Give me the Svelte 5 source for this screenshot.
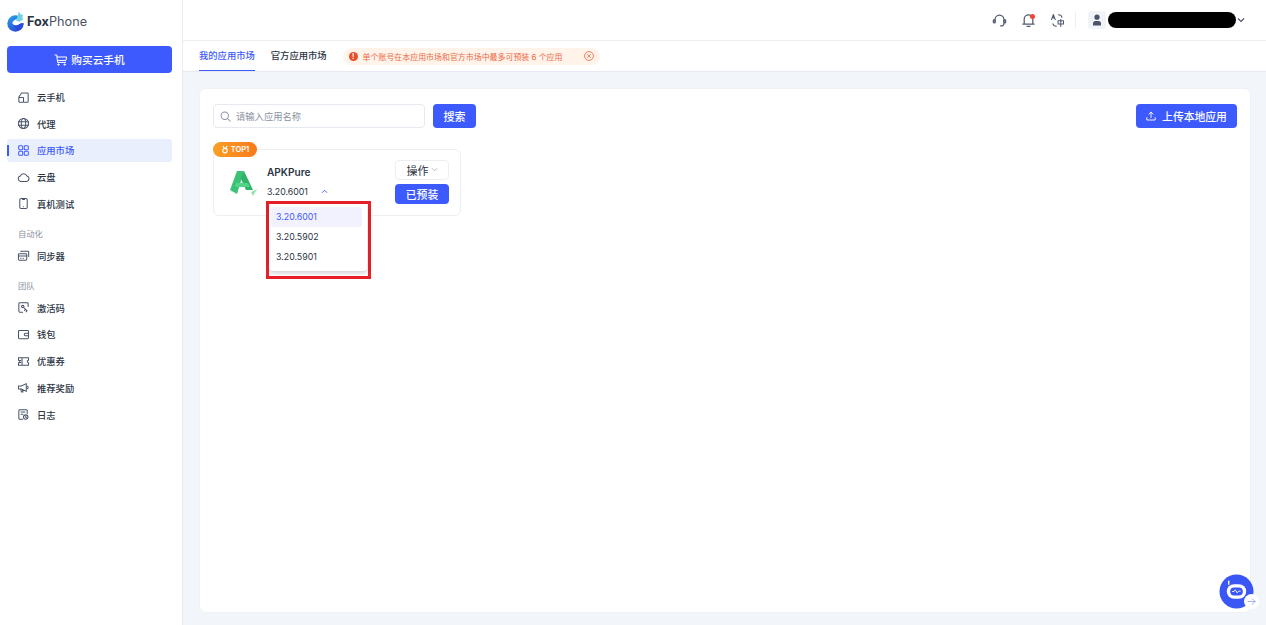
<script>
  const mainNav = [
    { label: '云手机', icon: 'phones' },
    { label: '代理', icon: 'globe' },
    { label: '应用市场', icon: 'grid', active: true },
    { label: '云盘', icon: 'cloud' },
    { label: '真机测试', icon: 'device' }
  ];
  const autoNav = [{ label: '同步器', icon: 'sync' }];
  const teamNav = [
    { label: '激活码', icon: 'code' },
    { label: '钱包', icon: 'wallet' },
    { label: '优惠券', icon: 'coupon' },
    { label: '推荐奖励', icon: 'horn' },
    { label: '日志', icon: 'log' }
  ];
  const versions = ['3.20.6001', '3.20.5902', '3.20.5901'];
</script>

{#snippet navIcon(name)}
  <svg class="nav-icon" viewBox="0 0 14 14" fill="none" stroke="currentColor" stroke-width="1.1" stroke-linejoin="round" stroke-linecap="round">
    {#if name === 'phones'}
      <path d="M5 2.2h6.200a.8.8 0 0 1 .8.8v8.200a.8.8 0 0 1-.8.8H7.500M5 2.200 2 6.400M2 7h4.400a.6.6 0 0 1 .6.6v3.800a.6.6 0 0 1-.6.6H2.600a.6.6 0 0 1-.6-.6z" />
    {:else if name === 'globe'}
      <circle cx="7" cy="7" r="5.400" />
      <ellipse cx="7" cy="7" rx="2.400" ry="5.400" />
      <path d="M1.600 5.200h10.800M1.600 8.800h10.800" />
    {:else if name === 'grid'}
      <rect x="1.800" y="1.800" width="4.400" height="4.400" rx="1.100" />
      <rect x="7.800" y="1.800" width="4.400" height="4.400" rx="1.100" />
      <rect x="1.800" y="7.800" width="4.400" height="4.400" rx="1.100" />
      <rect x="7.800" y="7.800" width="4.400" height="4.400" rx="1.100" />
    {:else if name === 'cloud'}
      <path d="M4 11.200a2.900 2.900 0 0 1-.4-5.700 3.700 3.700 0 0 1 7-.2 3 3 0 0 1-.4 5.900z" />
    {:else if name === 'device'}
      <rect x="3" y="1.500" width="8" height="11" rx="1.400" />
      <path d="M6 1.700v1h2v-1M7 10.400v.2" />
    {:else if name === 'sync'}
      <rect x="1.500" y="5" width="9" height="7" rx="1" />
      <path d="M1.500 7.600h9M4 2.400h7.600a1 1 0 0 1 1 1V8M4 10h.4M6.400 10h.4" />
    {:else if name === 'code'}
      <path d="M6 12H3a1 1 0 0 1-1-1V3a1 1 0 0 1 1-1h8a1 1 0 0 1 1 1v3" />
      <circle cx="6.200" cy="6" r="1.300" />
      <path d="m7.200 7 3.600 3.600-1 1M9 9.200l-1 1" />
    {:else if name === 'wallet'}
      <rect x="1.600" y="2.600" width="10.800" height="9" rx="1" />
      <path d="M12.400 5.600H9.200a1.300 1.300 0 0 0 0 2.800h3.200" />
    {:else if name === 'coupon'}
      <path d="M1.600 3h10.800v2.600a1.400 1.400 0 0 0 0 2.800V11H1.600V8.400a1.400 1.400 0 0 0 0-2.800zM5.400 3v8M3 6h1M3 8h1" />
    {:else if name === 'horn'}
      <path d="M1.600 5.400h3L10 2.800v8.400L4.600 8.600h-3zM4 8.800l.8 3h1.600L5.800 9.400M11.200 5.600a1.600 1.600 0 0 1 0 2.800" />
    {:else if name === 'log'}
      <path d="M6 12.200H3a1 1 0 0 1-1-1V2.800a1 1 0 0 1 1-1h7a1 1 0 0 1 1 1v3M4.400 4.400h4.200M4.400 6.800h2" />
      <circle cx="9.400" cy="9.800" r="2.400" />
      <path d="M9.400 8.800v1.100l.8.5" />
    {/if}
  </svg>
{/snippet}

{#snippet navItem(item)}
  <div class="nav-item" class:active={item.active}>
    {@render navIcon(item.icon)}
    <span>{item.label}</span>
  </div>
{/snippet}

<div class="page">
  <aside class="sidebar">
    <div class="brand">
      <svg class="logo" viewBox="0 0 17 21" width="17" height="21">
        <defs>
          <linearGradient id="logoBlue" x1="0" y1="0" x2="0.6" y2="1">
            <stop offset="0" stop-color="#27a6e8" />
            <stop offset="1" stop-color="#2a4bd8" />
          </linearGradient>
        </defs>
        <circle cx="8.500" cy="12.500" r="8.200" fill="url(#logoBlue)" />
        <path d="M5.500 11c2.500-3 6.500-4.500 11.500-4v5.500c-2.500-.6-4 .2-5.500 1.200-2 1.300-4.500 1-6-1z" fill="#fff" />
        <path d="M9 9.500 11 4l.8-3.600 1.700 2.800 2.500.7-.8 2.300 1 2.300-4 2.300z" fill="#6fd0e6" />
        <path d="M6 13.500c2 1.600 4.500 1.200 6-.1 1.400-1 2.900-1.300 4.600-.8-.5 3.200-3 6-6 7z" fill="#2a4bd8" />
      </svg>
      <span class="brand-name"><b>Fox</b>Phone</span>
    </div>
    <button class="buy">
      <svg viewBox="0 0 14 14" width="14" height="14" fill="none" stroke="currentColor" stroke-width="1" stroke-linecap="round" stroke-linejoin="round">
        <path d="M1 2h1.800l.8 7.400h8M3 4h9.600l-.6 3.400H3.400" />
        <circle cx="4.400" cy="11.600" r=".7" />
        <circle cx="10.600" cy="11.600" r=".7" />
      </svg>
      购买云手机
    </button>
    <nav class="nav">
      {#each mainNav as item}
        {@render navItem(item)}
      {/each}
      <div class="group">自动化</div>
      {#each autoNav as item}
        {@render navItem(item)}
      {/each}
      <div class="group">团队</div>
      {#each teamNav as item}
        {@render navItem(item)}
      {/each}
    </nav>
  </aside>

  <div class="main">
    <header class="topbar">
      <svg class="top-icon" viewBox="0 0 16 16" fill="none" stroke="#4f5a6e" stroke-width="1.300" stroke-linecap="round">
        <path d="M3.200 9.500V7a4.800 4.800 0 0 1 9.600 0v2.500" />
        <rect x="1.400" y="7" width="2" height="3.600" rx="1" />
        <rect x="12.600" y="7" width="2" height="3.600" rx="1" />
        <path d="M12.800 10.800c0 1.800-1.600 3-3.600 3" />
      </svg>
      <span class="bell">
        <svg class="top-icon" viewBox="0 0 16 16" fill="none" stroke="#4f5a6e" stroke-width="1.300" stroke-linecap="round" stroke-linejoin="round">
          <path d="M3.400 11.800V6.600a4.600 4.600 0 0 1 9.200 0v5.200M2 11.800h12M6.400 14.200h3.200" />
        </svg>
        <i></i>
      </span>
      <svg class="top-icon" viewBox="0 0 16 16" fill="none" stroke="#4f5a6e" stroke-width="1.100" stroke-linecap="round" stroke-linejoin="round">
        <path d="M1.600 7l2-5.400L5.600 7M2.300 5.200h2.600M9 1.800c2 0 3.400 1 3.800 2.800M6.800 14.200c-2 0-3.400-1-3.800-2.800M8.600 8.200h5.800v3.600H8.600zM11.500 6.800v7.600" />
      </svg>
      <span class="divider"></span>
      <span class="avatar">
        <svg viewBox="0 0 12 12" width="12" height="12" fill="#4a5468">
          <circle cx="6" cy="3.200" r="2.600" />
          <path d="M2 11.600V9.400c0-1.300 1-2.300 2.300-2.300h3.400c1.300 0 2.300 1 2.300 2.300v2.200z" />
        </svg>
      </span>
      <span class="redacted"></span>
      <svg class="caret" viewBox="0 0 8 6" width="8" height="6" fill="none" stroke="#4a5468" stroke-width="1.100">
        <path d="m1 1.500 3 3 3-3" />
      </svg>
    </header>

    <div class="tabs">
      <span class="tab current">我的应用市场</span>
      <span class="tab">官方应用市场</span>
      <div class="notice">
        <span class="notice-dot">!</span>
        <span class="notice-text">单个账号在本应用市场和官方市场中最多可预装 6 个应用</span>
        <svg viewBox="0 0 12 12" width="10" height="10" fill="none" stroke="#ee6a45" stroke-width="1">
          <circle cx="6" cy="6" r="5.300" />
          <path d="m3.800 3.800 4.400 4.400m0-4.400-4.400 4.400" />
        </svg>
      </div>
    </div>

    <main class="content">
      <section class="panel">
        <div class="toolbar">
          <div class="search">
            <svg viewBox="0 0 12 12" width="11" height="11" fill="none" stroke="#8b93a1" stroke-width="1.100" stroke-linecap="round">
              <circle cx="5.200" cy="5.200" r="4" />
              <path d="m8.200 8.200 3 3" />
            </svg>
            <span>请输入应用名称</span>
          </div>
          <button class="primary search-btn">搜索</button>
          <button class="primary upload">
            <svg viewBox="0 0 12 12" width="10" height="10" fill="none" stroke="currentColor" stroke-width="1.100" stroke-linecap="round" stroke-linejoin="round">
              <path d="M6 8V1.500M3.500 3.800 6 1.300l2.500 2.500M1 8v2.800h10V8" />
            </svg>
            上传本地应用
          </button>
        </div>

        <article class="app-card">
          <span class="badge">
            <svg viewBox="0 0 10 10" width="8" height="9" fill="none" stroke="#fff" stroke-width="1.400">
              <circle cx="5" cy="6.400" r="2.800" />
              <path d="m2.500 .6 1.600 3M7.500 .6l-1.600 3" />
            </svg>
            TOP1
          </span>
          <svg class="app-logo" viewBox="0 0 30 27" width="30" height="27">
            <path d="M9 2h7L9 25l-7-4z" fill="#3cc276" />
            <path d="M16 2l9 19h-7L12.500 9z" fill="#2fb36a" />
            <path d="M8 14h12l2 4H7z" fill="#52d488" />
            <path d="M23 23l6-3-4 7z" fill="#93e4ae" />
          </svg>
          <div class="app-info">
            <div class="app-name">APKPure</div>
            <div class="app-version">
              3.20.6001
              <svg viewBox="0 0 8 6" width="7" height="5" fill="none" stroke="#3d5afe" stroke-width="1.100">
                <path d="m1 4.500 3-3 3 3" />
              </svg>
            </div>
          </div>
          <div class="app-actions">
            <button class="ops">
              操作
              <svg viewBox="0 0 8 6" width="7" height="5" fill="none" stroke="#9aa1ad" stroke-width=".9">
                <path d="m1 1.500 3 3 3-3" />
              </svg>
            </button>
            <button class="primary installed">已预装</button>
          </div>

          <div class="annotation">
            <div class="menu">
              {#each versions as v, i}
                <div class="option" class:selected={i === 0}>{v}</div>
              {/each}
            </div>
          </div>
        </article>
      </section>
    </main>
  </div>

  <div class="bot">
    <svg viewBox="0 0 36 36" width="35" height="35">
      <circle cx="18" cy="18" r="17.500" fill="#3a57f5" />
      <path d="M10 7.500v3" stroke="#fff" stroke-width="1.400" stroke-linecap="round" />
      <rect x="8" y="10.500" width="20" height="15" rx="7.500" fill="#fff" />
      <rect x="11.500" y="14" width="13" height="8" rx="4" fill="#3a57f5" />
      <path d="M13.500 18h2l1.200-1.800 2 3.200 1.400-1.800h2.200" fill="none" stroke="#fff" stroke-width=".9" />
    </svg>
    <span class="bot-arrow">
      <svg viewBox="0 0 10 10" width="9" height="9" fill="none" stroke="#9db0f5" stroke-width="1.100" stroke-linecap="round" stroke-linejoin="round">
        <path d="M1 5h8M5.800 1.800 9 5 5.800 8.200" />
      </svg>
    </span>
  </div>
</div>

<style>
  :global(body) {
    margin: 0;
    font-family: Inter, 'Noto Sans CJK SC', sans-serif;
    color: #2b3444;
  }

  button {
    font-family: inherit;
    border: 0;
    cursor: pointer;
  }

  .page {
    display: flex;
    height: 625px;
    overflow: hidden;
    position: relative;
    background: #fff;
  }

  .sidebar {
    width: 183px;
    flex: none;
    box-sizing: border-box;
    padding: 0 10px 0 7px;
    border-right: 1px solid #e8ebf0;
  }

  .brand {
    display: flex;
    align-items: center;
    gap: 3px;
    height: 42px;
    box-sizing: border-box;
    padding-top: 0;
  }

  .brand-name {
    font-size: 12.700px;
    color: #4a5260;
    margin-top: 1px;
  }

  .brand-name b {
    font-weight: 700;
    color: #2b3444;
  }

  .buy {
    margin-top: 4px;
    width: 165px;
    height: 27px;
    background: #3d5afe;
    color: #fff;
    border-radius: 4px;
    display: flex;
    align-items: center;
    justify-content: center;
    gap: 3px;
    font-size: 10.700px;
    font-weight: 500;
    padding: 0;
  }

  .nav {
    margin-top: 12.500px;
  }

  .nav-item {
    display: flex;
    align-items: center;
    gap: 7px;
    height: 23px;
    margin-bottom: 3.700px;
    padding-left: 10px;
    font-size: 9.300px;
    font-weight: 500;
    color: #2b3444;
    border-radius: 3px;
    position: relative;
  }

  .nav-item.active {
    background: #e9effd;
    color: #3d5afe;
  }

  .nav-item.active::before {
    content: '';
    position: absolute;
    left: 0;
    top: 6px;
    width: 2px;
    height: 11px;
    background: #3d5afe;
  }

  .nav-icon {
    width: 13px;
    height: 13px;
    flex: none;
    color: #4a5468;
  }

  .active .nav-icon {
    color: #3d5afe;
  }

  .group {
    font-size: 8.300px;
    color: #8b93a1;
    padding-left: 11px;
    height: 13px;
    line-height: 13px;
    margin-top: 12.500px;
    margin-bottom: 3.500px;
  }

  .main {
    flex: 1;
    min-width: 0;
    display: flex;
    flex-direction: column;
  }

  .topbar {
    height: 40px;
    flex: none;
    display: flex;
    align-items: center;
    justify-content: flex-end;
    gap: 14px;
    padding-right: 21px;
    border-bottom: 1px solid #eceef2;
  }

  .top-icon {
    width: 15px;
    height: 15px;
    display: block;
  }

  .bell {
    position: relative;
  }

  .bell i {
    position: absolute;
    top: 1px;
    right: 1px;
    width: 5px;
    height: 5px;
    border-radius: 50%;
    background: #f04438;
  }

  .divider {
    width: 1px;
    height: 16px;
    background: #eceef2;
    margin-left: -4px;
  }

  .avatar {
    width: 18px;
    height: 18px;
    border-radius: 3px;
    background: #f0f3f8;
    display: flex;
    align-items: center;
    justify-content: center;
    margin-left: -2px;
  }

  .redacted {
    width: 128px;
    height: 16px;
    border-radius: 8px;
    background: #000;
    margin-left: -12px;
  }

  .caret {
    margin-left: -13px;
  }

  .tabs {
    height: 31px;
    flex: none;
    display: flex;
    align-items: center;
    padding-left: 16px;
    gap: 16px;
    border-bottom: 1px solid #e6e9ef;
    box-sizing: border-box;
  }

  .tab {
    font-size: 9.300px;
    font-weight: 500;
    line-height: 30px;
    height: 30px;
    box-sizing: border-box;
  }

  .tab.current {
    color: #3d5afe;
    border-bottom: 1px solid #3d5afe;
  }

  .notice {
    height: 17px;
    width: 257px;
    box-sizing: border-box;
    padding: 0 6px;
    background: #fff3ea;
    border-radius: 9px;
    display: flex;
    align-items: center;
    color: #ee6a45;
    font-size: 7.950px;
  }

  .notice-dot {
    width: 9px;
    height: 9px;
    border-radius: 50%;
    background: #e5502a;
    color: #fff;
    font-size: 7px;
    font-weight: 700;
    line-height: 9px;
    text-align: center;
    margin-right: 5px;
    flex: none;
  }

  .notice-text {
    flex: 1;
    white-space: nowrap;
  }

  .content {
    flex: 1;
    background: #f2f5fa;
    padding: 16px 15px 12px 16px;
    min-height: 0;
  }

  .panel {
    height: 100%;
    box-sizing: border-box;
    background: #fff;
    border-radius: 7px;
    padding: 16px 14px;
    border: 1px solid #eef1f6;
  }

  .toolbar {
    display: flex;
    align-items: center;
    gap: 8px;
    margin-top: -1px;
  }

  .search {
    width: 212px;
    height: 24px;
    box-sizing: border-box;
    border: 1px solid #e6e9ef;
    border-radius: 4px;
    display: flex;
    align-items: center;
    gap: 5px;
    padding-left: 6px;
    font-size: 9.300px;
    color: #8b93a1;
    margin-left: -1px;
  }

  .primary {
    background: #3d5afe;
    color: #fff;
    border-radius: 4px;
    font-weight: 500;
  }

  .search-btn {
    width: 43px;
    height: 24px;
    font-size: 11px;
    padding: 0;
  }

  .upload {
    margin-left: auto;
    margin-right: -1px;
    width: 101px;
    height: 24px;
    font-size: 10.800px;
    display: flex;
    align-items: center;
    justify-content: center;
    gap: 6px;
    padding: 0;
  }

  .app-card {
    position: relative;
    margin-top: 21px;
    margin-left: -1px;
    width: 248px;
    height: 67px;
    box-sizing: border-box;
    border: 1px solid #edeff3;
    border-radius: 6px;
    display: flex;
    align-items: center;
    padding: 0 11px 0 14px;
  }

  .badge {
    position: absolute;
    left: -1px;
    top: -8px;
    width: 44px;
    height: 15px;
    border-radius: 8px;
    background: linear-gradient(90deg, #fa9f24, #fb7a1c);
    color: #fff;
    font-size: 7.500px;
    font-weight: 600;
    display: flex;
    align-items: center;
    justify-content: center;
    gap: 2px;
  }

  .app-info {
    margin-left: 9px;
    margin-bottom: 4px;
    flex: 1;
  }

  .app-name {
    font-size: 10.100px;
    font-weight: 600;
    line-height: 14px;
    margin-bottom: 7px;
    margin-top: 1px;
  }

  .app-version {
    font-size: 8.800px;
    line-height: 12px;
    display: flex;
    align-items: center;
    gap: 13px;
  }

  .app-actions {
    display: flex;
    flex-direction: column;
    gap: 4px;
    margin-bottom: 2px;
  }

  .ops {
    width: 54px;
    height: 20px;
    background: #fff;
    border: 1px solid #eceef2;
    border-radius: 4px;
    font-size: 11px;
    color: #2b3444;
    display: flex;
    align-items: center;
    justify-content: center;
    gap: 2px;
    padding: 0;
  }

  .installed {
    width: 54px;
    height: 20px;
    font-size: 10.800px;
    padding: 0;
  }

  .annotation {
    position: absolute;
    left: 52px;
    top: 51px;
    width: 105px;
    height: 78px;
    box-sizing: border-box;
    border: 3px solid #e8202a;
    background: #fff;
    z-index: 2;
  }

  .menu {
    box-sizing: border-box;
    height: 67px;
    padding: 3px 5px 0 2px;
    border-radius: 0 0 4px 4px;
    box-shadow: 0 2px 4px rgba(30, 40, 60, 0.22);
    margin-right: 1px;
  }

  .option {
    height: 20px;
    line-height: 19px;
    font-size: 8.800px;
    padding-left: 5px;
    border-radius: 3px;
  }

  .option.selected {
    background: #f1f2fd;
    color: #3d5afe;
  }

  .bot {
    position: absolute;
    left: 1219px;
    top: 574px;
  }

  .bot svg {
    display: block;
  }

  .bot-arrow {
    position: absolute;
    left: 25px;
    top: 20px;
    width: 15px;
    height: 15px;
    border-radius: 50%;
    background: #fff;
    display: flex;
    align-items: center;
    justify-content: center;
  }
</style>
